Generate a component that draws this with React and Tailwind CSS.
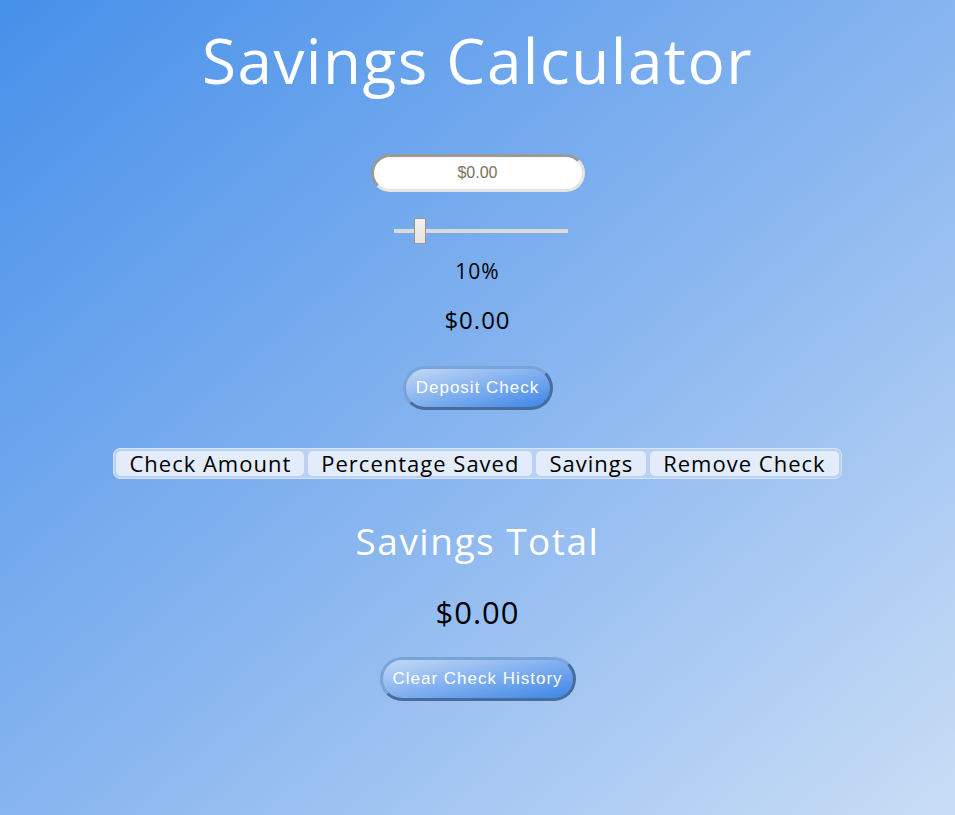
import { useState } from "react";

const font = { fontFamily: '"Open Sans", "Noto Sans", sans-serif' };

const PillButton = ({ children, className = "" }) => (
    <button
        className={`rounded-full border-[3px] border-t-[#7aa3d8] border-l-[#7aa3d8] border-b-[#4a6c9c] border-r-[#4a6c9c] bg-gradient-to-br from-[#c4d9f5] to-[#3a85e6] text-white text-[17px] tracking-[1px] font-['Liberation_Sans',Arial,sans-serif] ${className}`}
    >
        {children}
    </button>
);

export default function App() {
    const [amount, setAmount] = useState("");
    const percent = 10;
    const headers = ["Check Amount", "Percentage Saved", "Savings", "Remove Check"];

    return (
        <div
            style={font}
            className="min-h-[815px] w-full bg-gradient-to-br from-[#4590ea] via-[#86b4ef] to-[#c9ddf5] flex flex-col items-center"
        >
            <h1 className="mt-[22px] text-[62px] leading-[76px] text-white tracking-[1.5px]">
                Savings Calculator
            </h1>

            <input
                value={amount}
                onChange={e => setAmount(e.target.value)}
                placeholder="$0.00"
                className="mt-[56px] w-[214px] h-[38px] rounded-full bg-white border-[3px] border-t-[#9a9a9a] border-l-[#9a9a9a] border-b-[#e4e4e4] border-r-[#e4e4e4] text-center text-[16px] text-[#666] placeholder-[#7a6f60] outline-none font-['Liberation_Sans',Arial,sans-serif]"
            />

            <div className="relative mt-[26px] ml-[6px] w-[174px] h-[26px] flex items-center">
                <div className="w-full h-[4px] bg-[#dcdad6]" />
                <div className="absolute left-[20px] top-0 w-[12px] h-[26px] bg-gradient-to-b from-[#f3f1ee] to-[#e6e3df] border border-[#9a9590]" />
            </div>

            <p className="mt-[12px] text-[21px] leading-[30px] tracking-[1px] text-black">{percent}%</p>
            <p className="mt-[18px] text-[24px] leading-[32px] tracking-[1px] text-black">$0.00</p>

            <PillButton className="mt-[30px] w-[150px] h-[44px]">Deposit Check</PillButton>

            <div className="mt-[38px] flex gap-[4px] p-[2px] rounded-[7px] border border-[#d6e4f8] bg-[#b9d2f4]">
                {headers.map(h => (
                    <div
                        key={h}
                        className="h-[25px] px-[13px] flex items-center rounded-[5px] bg-[#e2ecfb] text-[22px] tracking-[1px] text-black"
                    >
                        {h}
                    </div>
                ))}
            </div>

            <h2 className="mt-[37px] text-[37px] leading-[50px] text-white tracking-[1.5px]">Savings Total</h2>
            <p className="mt-[26px] text-[31px] leading-[40px] tracking-[1px] text-black">$0.00</p>

            <PillButton className="mt-[25px] w-[196px] h-[44px]">Clear Check History</PillButton>
        </div>
    );
}
